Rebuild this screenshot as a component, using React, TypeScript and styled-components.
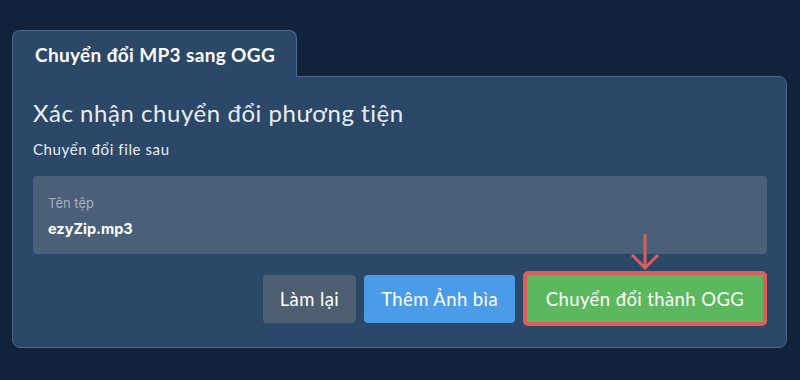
import React from "react";
import styled, { createGlobalStyle } from "styled-components";

const GlobalStyle = createGlobalStyle`
  html, body {
    margin: 0;
    padding: 0;
    background: #10233a;
  }
  body {
    font-family: Lato, "Noto Sans", sans-serif;
  }
`;

const Page = styled.div`
  width: 800px;
  height: 380px;
  box-sizing: border-box;
  padding: 30px 13px 0 12px;
`;

const TabBar = styled.div`
  display: flex;
  position: relative;
  z-index: 1;
  margin-bottom: -1px;
`;

const Tab = styled.div`
  background: #2c4868;
  border: 1px solid #4d6686;
  border-bottom: none;
  border-radius: 8px 8px 0 0;
  height: 47px;
  box-sizing: border-box;
  padding: 0 21px 0 22px;
  display: flex;
  align-items: center;
  white-space: nowrap;
  color: #ffffff;
  font-weight: 700;
  font-size: 19px;
  letter-spacing: 0.35px;
`;

const Panel = styled.div`
  background: #2c4868;
  border: 1px solid #4d6686;
  border-radius: 0 8px 8px 8px;
  padding: 20px 19px 20px 20px;
  height: 272px;
  box-sizing: border-box;
  display: flex;
  flex-direction: column;
`;

const Title = styled.h2`
  margin: 0;
  font-size: 24px;
  font-weight: 400;
  color: #e9edf2;
  line-height: 32px;
  letter-spacing: 0.55px;
`;

const Subtitle = styled.div`
  margin-top: 9px;
  font-size: 15px;
  color: #e9edf2;
  line-height: 22px;
  letter-spacing: 0.6px;
`;

const FileBox = styled.div`
  margin-top: 16px;
  background: #4a5f78;
  border-radius: 4px;
  height: 78px;
  box-sizing: border-box;
  padding: 18px 15px;
  font-family: Inter, "Noto Sans", sans-serif;
`;

const FileLabel = styled.div`
  font-size: 13px;
  color: #a7b2bf;
  line-height: 18px;
`;

const FileName = styled.div`
  margin-top: 7px;
  font-size: 14.5px;
  font-weight: 700;
  color: #ffffff;
  line-height: 20px;
`;

const Actions = styled.div`
  margin-top: 17px;
  display: flex;
  justify-content: flex-end;
  align-items: center;
  gap: 8px;
`;

const Button = styled.button<{ $bg: string }>`
  background: ${(p) => p.$bg};
  border: none;
  border-radius: 4px;
  height: 48px;
  padding: 0 17px;
  color: #ffffff;
  font-family: Lato, "Noto Sans", sans-serif;
  font-size: 18.5px;
  letter-spacing: 0.4px;
  cursor: pointer;
`;

const Highlight = styled.div`
  position: relative;
  border: 4px solid #dc5e5a;
  border-radius: 5px;
  display: flex;
`;

const ConvertButton = styled(Button)`
  border-radius: 0;
  height: 47px;
  width: 236px;
  padding: 0;
`;

const Arrow = styled.svg`
  position: absolute;
  left: 103px;
  top: -42px;
`;

export default function App() {
  return (
    <>
      <GlobalStyle />
      <Page>
        <TabBar>
          <Tab>Chuyển đổi MP3 sang OGG</Tab>
        </TabBar>
        <Panel>
          <Title>Xác nhận chuyển đổi phương tiện</Title>
          <Subtitle>Chuyển đổi file sau</Subtitle>
          <FileBox>
            <FileLabel>Tên tệp</FileLabel>
            <FileName>ezyZip.mp3</FileName>
          </FileBox>
          <Actions>
            <Button $bg="#4e5f71">Làm lại</Button>
            <Button $bg="#4a9be8">Thêm Ảnh bìa</Button>
            <Highlight>
              <Arrow width="30" height="38" viewBox="0 0 30 38">
                <path
                  d="M15 1 V35 M2 22 L15 35 L28 22"
                  fill="none"
                  stroke="#dc5e5a"
                  strokeWidth="3"
                />
              </Arrow>
              <ConvertButton $bg="#5cb85c">Chuyển đổi thành OGG</ConvertButton>
            </Highlight>
          </Actions>
        </Panel>
      </Page>
    </>
  );
}
